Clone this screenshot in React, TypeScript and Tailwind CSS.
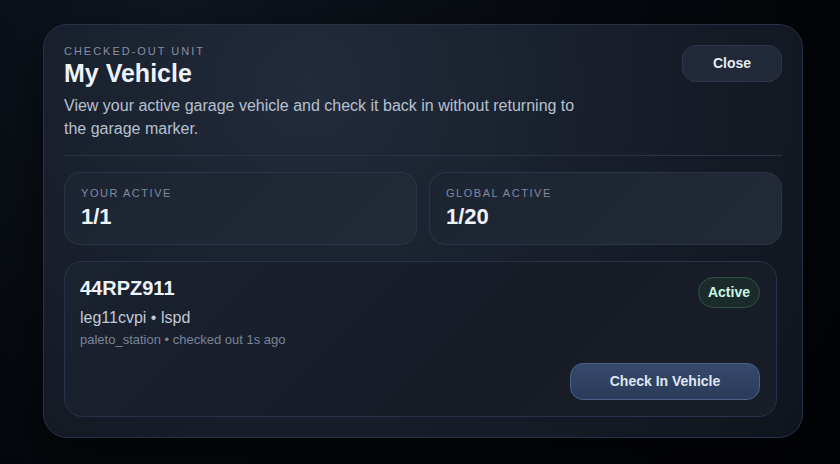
const STATS = [
  { label: 'Your Active', value: '1/1' },
  { label: 'Global Active', value: '1/20' },
];

const VEHICLE = {
  plate: '44RPZ911',
  model: 'leg11cvpi',
  job: 'lspd',
  garage: 'paleto_station',
  since: '1s ago',
};

export default function App() {
  return (
    <main
      className="h-[464px] w-[840px] overflow-hidden bg-[radial-gradient(circle_at_20%_0%,#0f1620,#05080d_55%,#020306)] pl-[43px] pt-[24px] text-[#e9eef6]"
      style={{ fontFamily: '"Liberation Sans", Arial, sans-serif' }}
    >
      <section className="flex h-[414px] w-[760px] flex-col rounded-[24px] border border-[#273247] bg-[radial-gradient(circle_at_35%_15%,#222b3b,#171d29_55%,#10141c)] px-5 pb-5 pt-5 shadow-[0_20px_50px_rgba(0,0,0,0.6)]">
        {/* header */}
        <div className="flex items-start justify-between">
          <div>
            <p className="text-[11px] uppercase leading-[13px] tracking-[0.18em] text-[#858fa3]">Checked-out unit</p>
            <h1 className="text-[25px] font-bold leading-[30px] text-[#eef2f9]">My Vehicle</h1>
            <p className="mt-[6px] w-[530px] text-[16px] leading-[23px] text-[#b6c0d1]">
              View your active garage vehicle and check it back in without returning to the garage marker.
            </p>
          </div>
          <button className="h-[37px] w-[100px] rounded-[14px] border border-[#2e394d] bg-[#212938] text-[14px] font-bold text-[#e6ebf3]">
            Close
          </button>
        </div>

        <div className="mt-[15px] h-px bg-[#2a3446]" />

        {/* stats */}
        <div className="mt-4 grid grid-cols-2 gap-3">
          {STATS.map(s => (
            <div
              key={s.label}
              className="h-[73px] rounded-[16px] border border-[#2a3549] bg-[linear-gradient(135deg,#1d2431,#222937)] px-4 pt-[14px]"
            >
              <p className="text-[11px] uppercase leading-[13px] tracking-[0.14em] text-[#8089a0]">{s.label}</p>
              <p className="mt-[4px] text-[22px] font-bold leading-[26px] text-[#eef2f9]">{s.value}</p>
            </div>
          ))}
        </div>

        {/* vehicle list */}
        <div className="mt-4 flex-1 pr-[5px]">
          <div className="flex h-full flex-col rounded-[18px] border border-[#28324a] bg-[linear-gradient(135deg,#1b2230,#161b26_60%,#181d27)] p-4 pl-[15px]">
            <div className="flex items-start justify-between">
              <div>
                <p className="text-[20px] font-bold leading-[20px] text-[#eef2f9]">{VEHICLE.plate}</p>
                <p className="mt-[10px] text-[16px] leading-[20px] text-[#c2cad7]">
                  {VEHICLE.model} • {VEHICLE.job}
                </p>
                <p className="mt-[4px] text-[13px] leading-[16px] text-[#7a849a]">
                  {VEHICLE.garage} • checked out {VEHICLE.since}
                </p>
              </div>
              <span className="mt-[-1px] flex h-[31px] items-center rounded-full border border-[#2c5547] bg-[#1b2a2a] px-[9px] text-[14px] font-bold text-[#c9f7e6]">
                Active
              </span>
            </div>
            <div className="mt-auto flex justify-end">
              <button className="h-[37px] w-[190px] rounded-[13px] border border-[#4a6189] bg-[linear-gradient(180deg,#36496b,#2a3b59)] text-[14px] font-bold text-[#dfe7f3]">
                Check In Vehicle
              </button>
            </div>
          </div>
        </div>
      </section>
    </main>
  );
}
